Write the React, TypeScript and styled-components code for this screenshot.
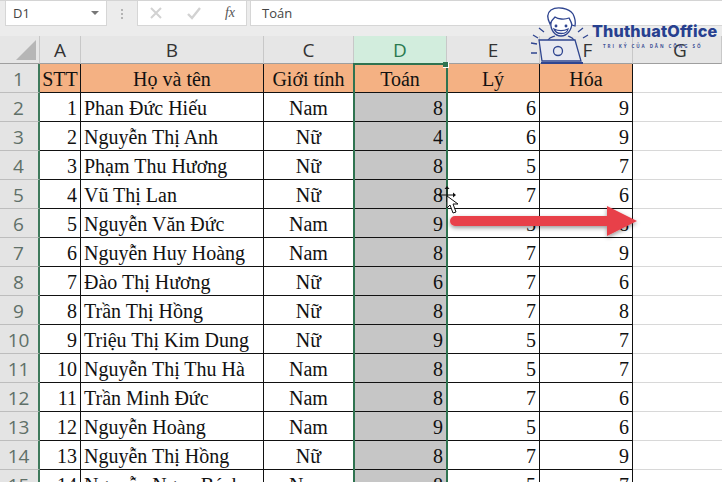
import React from "react";
import styled, { createGlobalStyle } from "styled-components";

const Global = createGlobalStyle`
  html, body {
    margin: 0;
    padding: 0;
    background: #fff;
  }
  body {
    width: 722px;
    height: 482px;
    overflow: hidden;
  }
`;

const Page = styled.div`
  position: relative;
  width: 722px;
  height: 482px;
  overflow: hidden;
  background: #fff;
`;

const Toolbar = styled.div`
  display: flex;
  align-items: flex-start;
  height: 36px;
  padding-left: 5px;
  box-sizing: border-box;
  background: #ececec;
  border-top: 1px solid #d4d4d4;
`;

const NameBox = styled.div`
  display: flex;
  align-items: center;
  justify-content: space-between;
  box-sizing: border-box;
  width: 102px;
  height: 25px;
  padding: 0 7px;
  background: #fff;
  border: 1px solid #d6d6d6;
  border-top: 0;
  font: 13px "Open Sans", sans-serif;
  color: #444;
`;

const Caret = styled.span`
  width: 0;
  height: 0;
  border-left: 4px solid transparent;
  border-right: 4px solid transparent;
  border-top: 4px solid #777;
`;

const Dots = styled.div`
  display: flex;
  flex-direction: column;
  gap: 2px;
  width: 3px;
  margin: 8px 13px 0 14px;
  span {
    width: 2px;
    height: 2px;
    background: #b4b4b4;
  }
`;

const FxBox = styled.div`
  display: flex;
  align-items: center;
  box-sizing: border-box;
  width: 110px;
  height: 25px;
  padding: 0 11px 0 11px;
  justify-content: space-between;
  background: #fff;
  border: 1px solid #d6d6d6;
  border-top: 0;
`;

const FxLabel = styled.span`
  font: italic 14px "Liberation Serif", serif;
  color: #555;
`;

const FormulaInput = styled.div`
  flex: 1;
  box-sizing: border-box;
  height: 25px;
  margin-left: 3px;
  padding: 3px 11px;
  background: #fff;
  border: 1px solid #d6d6d6;
  border-top: 0;
  border-right: 0;
  font: 13px "Open Sans", sans-serif;
  color: #444;
`;

const Sheet = styled.div`
  display: grid;
  grid-template-columns: 40px 41px 183px 90px 93px 93px 93px 89px;
  grid-template-rows: 28px repeat(15, 29px);
`;

const Corner = styled.div`
  position: relative;
  background: #e6e6e6;
  border-right: 1px solid #c8c8c8;
  border-bottom: 1px solid #9f9f9f;
  box-sizing: border-box;
  &::after {
    content: "";
    position: absolute;
    right: 3px;
    bottom: 3px;
    width: 0;
    height: 0;
    border-left: 20px solid transparent;
    border-bottom: 20px solid #b6b6b6;
  }
`;

const ColHead = styled.div<{ $active?: boolean; $shift?: number }>`
  display: flex;
  align-items: center;
  justify-content: center;
  box-sizing: border-box;
  padding-left: ${(p) => p.$shift || 0}px;
  font: 19px "Open Sans", sans-serif;
  color: ${(p) => (p.$active ? "#2a7a50" : "#333")};
  background: ${(p) => (p.$active ? "#d2eddd" : "#e6e6e6")};
  border-right: 1px solid #c8c8c8;
  border-bottom: 1px solid #9f9f9f;
`;

const RowHead = styled.div`
  display: flex;
  align-items: center;
  justify-content: center;
  box-sizing: border-box;
  padding: 2px 1px 0 0;
  font: 19px "Open Sans", sans-serif;
  color: #5f7068;
  background: #e4e4e4;
  border-right: 2px solid #3f7a5c;
  border-bottom: 1px solid #bdbdbd;
`;

const Cell = styled.div<{ $align?: string; $tone?: string }>`
  display: flex;
  align-items: center;
  justify-content: ${(p) => p.$align || "flex-start"};
  box-sizing: border-box;
  padding: 2px 3px 0;
  font: 20px "Liberation Serif", serif;
  color: #111;
  white-space: nowrap;
  overflow: hidden;
  background: ${(p) =>
    p.$tone === "head" ? "#f4b183" : p.$tone === "picked" ? "#c6c6c6" : "#fff"};
  border-right: 1px solid #111;
  border-bottom: 1px solid #111;
`;

const EmptyCell = styled.div`
  box-sizing: border-box;
  background: #fff;
  border-bottom: 1px solid #d8d8d8;
`;

const Selection = styled.div`
  position: absolute;
  left: 353px;
  top: 63px;
  bottom: -4px;
  width: 95px;
  box-sizing: border-box;
  border: 2px solid #2f7350;
  border-bottom: 0;
  pointer-events: none;
`;

const Handle = styled.div`
  position: absolute;
  right: -3px;
  top: -3px;
  width: 5px;
  height: 5px;
  background: #2f7350;
  border-right: 1px solid #fff;
  border-bottom: 1px solid #fff;
`;

const Logo = styled.div`
  position: absolute;
  left: 525px;
  top: 5px;
  display: flex;
  align-items: flex-start;
`;

const LogoText = styled.div`
  display: flex;
  flex-direction: column;
  margin: 16px 0 0 -3px;
`;

const Brand = styled.div`
  font: 800 16.2px/20px Inter, "Open Sans", sans-serif;
  letter-spacing: 0.15px;
  color: #27408f;
  white-space: nowrap;
`;

const Slogan = styled.div`
  margin: 2px 0 0 11px;
  font: 700 4.5px/7px "Open Sans", sans-serif;
  letter-spacing: 1.9px;
  color: #3c4f95;
  white-space: nowrap;
`;

const Arrow = styled.svg`
  position: absolute;
  left: 440px;
  top: 198px;
`;

const Pointer = styled.svg`
  position: absolute;
  left: 436px;
  top: 184px;
`;

type Row = [string, string, string, string, string];

const rows: Row[] = [
  ["Phan Đức Hiếu", "Nam", "8", "6", "9"],
  ["Nguyễn Thị Anh", "Nữ", "4", "6", "9"],
  ["Phạm Thu Hương", "Nữ", "8", "5", "7"],
  ["Vũ Thị Lan", "Nữ", "8", "7", "6"],
  ["Nguyễn Văn Đức", "Nam", "9", "5", "8"],
  ["Nguyễn Huy Hoàng", "Nam", "8", "7", "9"],
  ["Đào Thị Hương", "Nữ", "6", "7", "6"],
  ["Trần Thị Hồng", "Nữ", "8", "7", "8"],
  ["Triệu Thị Kim Dung", "Nữ", "9", "5", "7"],
  ["Nguyễn Thị Thu Hà", "Nam", "8", "5", "7"],
  ["Trần Minh Đức", "Nam", "8", "7", "6"],
  ["Nguyễn Hoàng", "Nam", "9", "5", "6"],
  ["Nguyễn Thị Hồng", "Nữ", "8", "7", "9"],
  ["Nguyễn Ngọc Bách", "Nam", "8", "5", "7"],
];

const App = () => {
  return (
    <Page>
      <Global />
      <Toolbar>
        <NameBox>
          D1
          <Caret />
        </NameBox>
        <Dots>
          <span />
          <span />
          <span />
        </Dots>
        <FxBox>
          <svg width="14" height="14" viewBox="0 0 14 14">
            <path d="M2 2l10 10M12 2L2 12" stroke="#d2d2d2" strokeWidth="2" fill="none" />
          </svg>
          <svg width="16" height="14" viewBox="0 0 16 14">
            <path d="M2 8l4 4 8-10" stroke="#d2d2d2" strokeWidth="2.4" fill="none" />
          </svg>
          <FxLabel>fx</FxLabel>
        </FxBox>
        <FormulaInput>Toán</FormulaInput>
      </Toolbar>

      <Sheet>
        <Corner />
        {["A", "B", "C", "D", "E", "F", "G"].map((c) => (
          <ColHead key={c} $active={c === "D"} $shift={c === "G" ? 6 : c === "F" ? 3 : 0}>
            {c}
          </ColHead>
        ))}

        <RowHead>1</RowHead>
        <Cell $tone="head" $align="center">STT</Cell>
        <Cell $tone="head" $align="center">Họ và tên</Cell>
        <Cell $tone="head" $align="center">Giới tính</Cell>
        <Cell $tone="head" $align="center">Toán</Cell>
        <Cell $tone="head" $align="center">Lý</Cell>
        <Cell $tone="head" $align="center">Hóa</Cell>
        <EmptyCell />

        {rows.map((r, i) => (
          <React.Fragment key={r[0]}>
            <RowHead>{i + 2}</RowHead>
            <Cell $align="flex-end">{i + 1}</Cell>
            <Cell>{r[0]}</Cell>
            <Cell $align="center">{r[1]}</Cell>
            <Cell $tone="picked" $align="flex-end">{r[2]}</Cell>
            <Cell $align="flex-end">{r[3]}</Cell>
            <Cell $align="flex-end">{r[4]}</Cell>
            <EmptyCell />
          </React.Fragment>
        ))}
      </Sheet>

      <Selection>
        <Handle />
      </Selection>

      <Arrow width="204" height="46" viewBox="0 0 204 46">
        <defs>
          <filter id="arrow-shadow" x="-5%" y="-30%" width="110%" height="170%">
            <feDropShadow dx="0" dy="2" stdDeviation="2" floodColor="#000" floodOpacity="0.4" />
          </filter>
        </defs>
        <path
          d="M15 18h152v-10l30 15-30 15v-10H15a5 5 0 0 1 0-10z"
          fill="#e8404a"
          filter="url(#arrow-shadow)"
        />
      </Arrow>

      <Pointer width="26" height="32" viewBox="436 184 26 32">
        <path
          d="M447 189v13M439 195h16"
          stroke="#111"
          strokeWidth="1.2"
          fill="none"
        />
        <path d="M447 186l-2.5 3h5zM438 195l3-2.5v5zM456 195l-3-2.5v5z" fill="#111" />
        <path
          d="M447 196v12l3-3 3 8 3-1-3-8h5z"
          stroke="#111"
          strokeWidth="1"
          fill="#fff"
        />
      </Pointer>

      <Logo>
        <svg width="70" height="62" viewBox="525 5 70 62" fill="none" stroke="#2f4590" strokeWidth="1.3">
          <path d="M551 22c-1 8 4 14 10 14s11-6 11-14" fill="#fff" />
          <path
            d="M550 24c-3-6-3-11 1-14 6-4 18-2 22 4 2 4 3 7 2 12l-3-1c-1-4-2-5-3-7-5 2-11 1-14-1-2 2-4 4-5 7z"
            fill="#fff"
          />
          <circle cx="556" cy="26" r="0.8" fill="#2f4590" />
          <circle cx="566" cy="26" r="0.8" fill="#2f4590" />
          <path d="M554 29c4 2 10 2 14 0-1 6-12 6-14 0z" fill="#fff" />
          <path d="M548 40c2-3 5-3 7-4M574 40c-2-3-4-3-6-4" />
          <path d="M539 28l5 4M533 35l5 3M531 43l6 1M531 53h6M583 28l-5 4M588 35l-5 3" />
          <path d="M539 40h36l6 21h-39z" fill="#e8e9f0" />
          <path d="M541 63h42" strokeWidth="2" />
          <circle cx="558" cy="51" r="4.5" />
        </svg>
        <LogoText>
          <Brand>ThuthuatOffice</Brand>
          <Slogan>TRI KỶ CỦA DÂN CÔNG SỐ</Slogan>
        </LogoText>
      </Logo>
    </Page>
  );
};

export default App;
